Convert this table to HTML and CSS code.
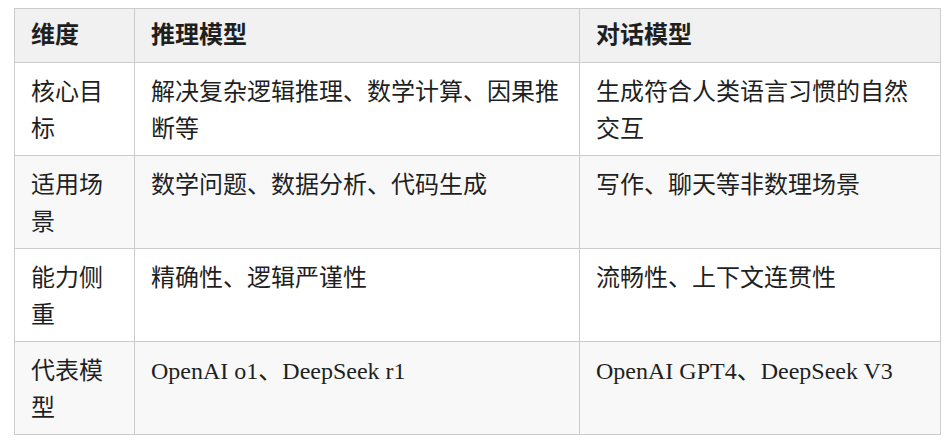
FILE: index.html
```html
<!DOCTYPE html>
<html lang="zh-CN">
<head>
<meta charset="utf-8">
<title>推理模型与对话模型</title>
<link rel="stylesheet" href="styles.css">
</head>
<body>
<table class="compare">
  <colgroup>
    <col class="c-dim">
    <col class="c-reason">
    <col class="c-chat">
  </colgroup>
  <thead>
    <tr>
      <th>维度</th>
      <th>推理模型</th>
      <th>对话模型</th>
    </tr>
  </thead>
  <tbody>
    <tr>
      <td>核心目标</td>
      <td>解决复杂逻辑推理、数学计算、因果推断等</td>
      <td>生成符合人类语言习惯的自然交互</td>
    </tr>
    <tr>
      <td>适用场景</td>
      <td>数学问题、数据分析、代码生成</td>
      <td>写作、聊天等非数理场景</td>
    </tr>
    <tr>
      <td>能力侧重</td>
      <td>精确性、逻辑严谨性</td>
      <td>流畅性、上下文连贯性</td>
    </tr>
    <tr>
      <td>代表模型</td>
      <td>OpenAI o1、DeepSeek r1</td>
      <td>OpenAI GPT4、DeepSeek V3</td>
    </tr>
  </tbody>
</table>
</body>
</html>
```
FILE: styles.css
```css
html, body {
  background: #ffffff;
}
body {
  margin: 8px 0 0 14px;
  font-family: "Liberation Serif", "Noto Sans CJK SC", serif;
  font-size: 24px;
  color: #1f1f1f;
}
.compare {
  border-collapse: collapse;
  table-layout: fixed;
  width: 926px;
}
.c-dim { width: 120px; }
.c-reason { width: 445px; }
.c-chat { width: 361px; }
.compare th,
.compare td {
  border: 1px solid #cccccc;
  padding: 11px 16px 7px;
  line-height: 37px;
  text-align: left;
  vertical-align: top;
}
.compare th {
  background: #f1f1f1;
  font-weight: 700;
  padding-top: 8px;
  padding-bottom: 8px;
}
.compare tbody tr:nth-child(even) td {
  background: #f8f8f8;
}
```
